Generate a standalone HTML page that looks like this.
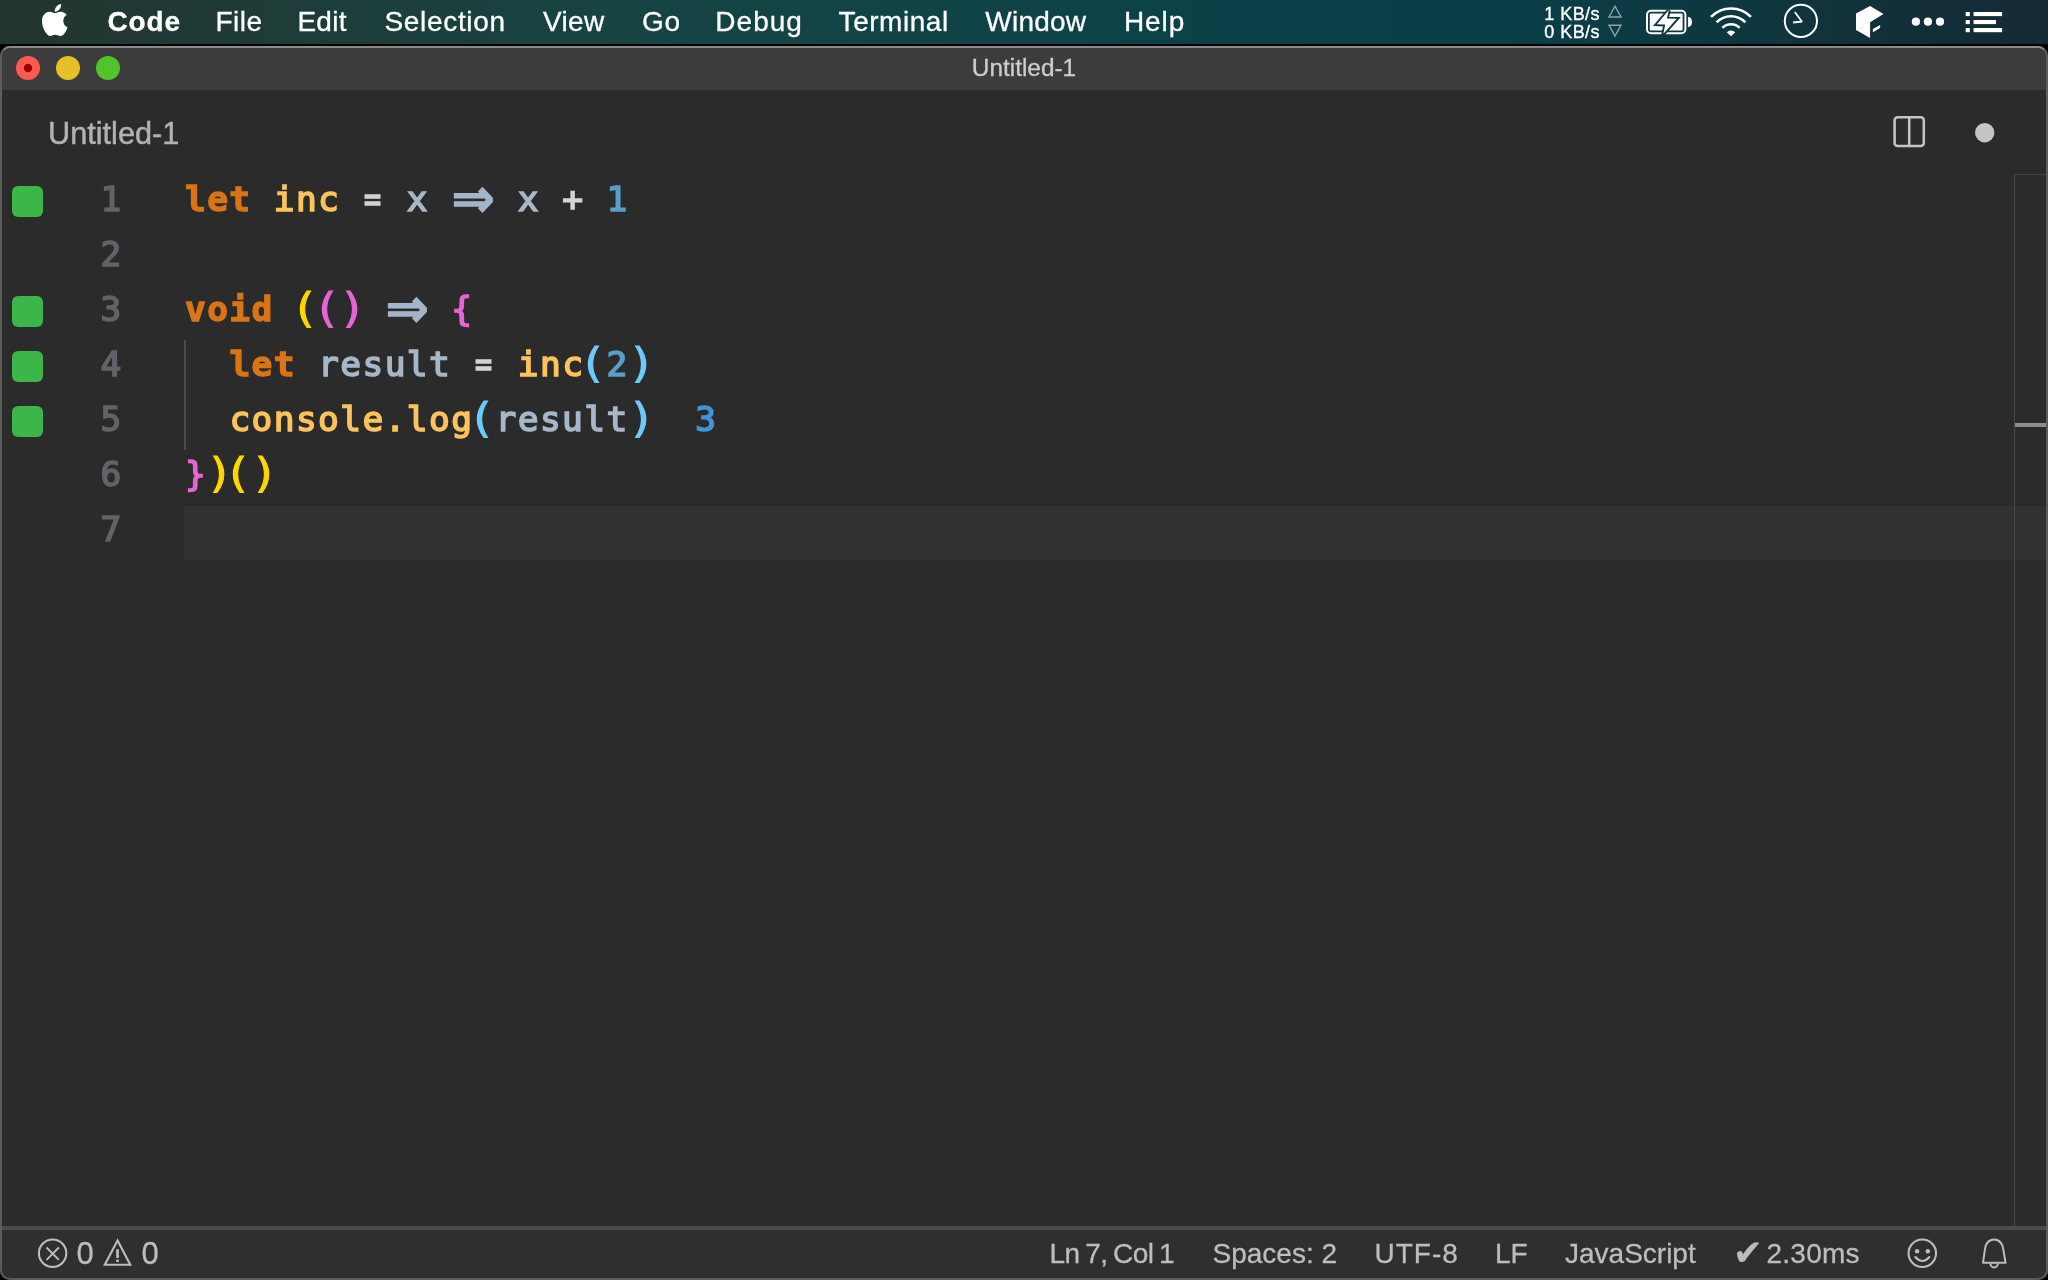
<!DOCTYPE html>
<html lang="en">
<head>
<meta charset="utf-8">
<title>Untitled-1</title>
<style>
*{box-sizing:border-box;margin:0;padding:0}
html,body{width:2048px;height:1280px;overflow:hidden;background:#000}
body{position:relative;font-family:"Liberation Sans",sans-serif;-webkit-font-smoothing:antialiased}
.abs{position:absolute}

/* ---------- macOS menu bar ---------- */
#menubar{position:absolute;left:0;top:0;width:2048px;height:46px;will-change:transform;
  background:linear-gradient(90deg,#233530 0px,#1f3a36 220px,#174443 620px,#0b4248 1200px,#0b3d47 1560px,#0f363e 1760px,#122f39 1900px,#142a36 2048px);}
#menubar .mi{position:absolute;top:0;height:44px;line-height:44px;color:#fff;font-size:28px;white-space:nowrap;-webkit-text-stroke:0.3px #fff}
#menubar .mi.b{font-weight:bold}
#menubar .kb{position:absolute;left:1540px;width:60px;text-align:right;color:#fff;font-size:18px;line-height:20px;white-space:nowrap;letter-spacing:0.45px;-webkit-text-stroke:0.35px #fff}
#mbline{position:absolute;left:0;top:44px;width:2048px;height:3px;background:#000}

/* ---------- window ---------- */
#win{position:absolute;left:0;top:46px;width:2048px;height:1234px;background:#2b2b2b;will-change:transform;
  border-radius:10px 10px 10px 10px;overflow:hidden}
#winborder{position:absolute;left:0;top:46px;width:2048px;height:1234px;border-radius:10px;
  border:2px solid #5c5c5c;border-top-color:#8a8a8a;pointer-events:none}
#titlebar{position:absolute;left:0;top:0;width:2048px;height:44px;background:#3c3c3c}
#title{position:absolute;left:0;top:2px;width:2048px;height:42px;line-height:40px;text-align:center;
  color:#cecece;font-size:24.4px;-webkit-text-stroke:0.3px #cecece}
.tl{position:absolute;top:10px;width:24px;height:24px;border-radius:50%}

/* ---------- tab row ---------- */
#tablabel{position:absolute;left:48px;top:64px;height:48px;line-height:48px;font-size:30.7px;color:#b2b2b2;white-space:nowrap;-webkit-text-stroke:0.45px #b2b2b2}

/* ---------- editor ---------- */
#editor{position:absolute;left:0;top:130px;width:2048px;height:1052px;
  font-family:"DejaVu Sans Mono","Liberation Mono",monospace;font-size:34.5px;letter-spacing:1.41px;-webkit-text-stroke:1.6px}
.ln{position:absolute;left:0;width:2048px;height:55px;line-height:55px;white-space:pre}
.num{position:absolute;left:0;top:-4px;width:122.6px;text-align:right;color:#606469}
.code{position:absolute;left:185px;top:-4px}
.arw{display:inline-block;width:44.36px;height:55px;vertical-align:top;position:relative}
.arw i{position:absolute;left:0;top:0;width:44.36px;height:55px;line-height:55px;text-align:center;font-style:normal;
  font-family:"DejaVu Sans",sans-serif;font-weight:bold;font-size:55px;letter-spacing:0;-webkit-text-stroke:1.2px;transform:translate(-0.9px,-1px) scaleX(0.94)}
.sq{position:absolute;left:12px;top:10px;width:30.5px;height:30.5px;border-radius:6px;background:#3cb648}
#curline{position:absolute;left:184px;top:330px;width:1864px;height:54px;background:#323232}
#guide{position:absolute;left:184.2px;top:164px;width:2.3px;height:110px;background:#4b4b4b}
#ruler-v{position:absolute;left:2014px;top:128px;width:1px;height:1054px;background:#474747}
#ruler-h{position:absolute;left:2014px;top:128px;width:34px;height:1px;background:#3f4144}
#ruler-m{position:absolute;left:2015px;top:377px;width:33px;height:4px;background:#8c8c8c}

.eq{display:inline-block;transform:scaleX(0.82)}
.pl,.pr{display:inline-block;-webkit-text-stroke:0.8px}
.pl{transform-origin:100% 50%;transform:translate(2px,-1.3px) scale(1.33,1.16)}
.pr{transform-origin:0% 50%;transform:translate(-1.2px,-1.3px) scale(1.33,1.16)}
.k{color:#da7516;font-weight:bold;-webkit-text-stroke:1.3px}   /* keyword orange */
.f{color:#fcc35d}   /* function yellow-orange */
.v{color:#a5b7c9}   /* variable gray-blue */
.o{color:#d4d4d4}   /* operator */
.a{color:#a3b5c8}   /* arrow */
.n{color:#5b9ec9}   /* number */
.b1{color:#ffd700}  /* bracket gold */
.b2{color:#e665d6}  /* bracket pink */
.b3{color:#6ccbfb}  /* bracket blue */
.r{color:#3d96d8}   /* inline result */

/* ---------- status bar ---------- */
#statusline{position:absolute;left:0;top:1180px;width:2048px;height:4px;background:#4b4b4b}
#status{position:absolute;left:0;top:1184px;width:2048px;height:50px;background:#2f2f2f;color:#bdbdbd;font-size:28px}
#status .si{position:absolute;top:-1px;height:50px;line-height:50px;white-space:nowrap;-webkit-text-stroke:0.3px #bdbdbd}
#status .z{font-size:31px;top:-1.5px}
#status .ck{font-family:"DejaVu Sans",sans-serif;font-size:35.5px;top:-1.6px;left:1732px}
</style>
</head>
<body>

<div id="menubar">
  <svg class="abs" style="left:42.4px;top:3.8px" width="25.6" height="32" viewBox="4 32 377 448" preserveAspectRatio="none"><path fill="#fff" d="M318.7 268.7c-.2-36.7 16.4-64.4 50-84.8-18.8-26.9-47.2-41.7-84.7-44.6-35.5-2.8-74.3 20.7-88.5 20.7-15 0-49.4-19.7-76.4-19.7C63.3 141.2 4 184.8 4 273.5q0 39.3 14.4 81.2c12.8 36.7 59 126.7 107.2 125.2 25.2-.6 43-17.9 75.8-17.9 31.8 0 48.3 17.9 76.4 17.9 48.6-.7 90.4-82.5 102.6-119.3-65.2-30.7-61.7-90-61.7-91.9zm-56.6-164.2c27.3-32.4 24.8-61.9 24-72.5-24.1 1.4-52 16.4-67.9 34.9-17.5 19.8-27.8 44.3-25.6 71.9 26.1 2 49.9-11.4 69.5-34.3z"/></svg>
  <span class="mi b" style="left:107.4px;letter-spacing:0.86px">Code</span>
  <span class="mi" style="left:215.5px;letter-spacing:0.48px">File</span>
  <span class="mi" style="left:297.4px;letter-spacing:0.29px">Edit</span>
  <span class="mi" style="left:384.5px;letter-spacing:0.67px">Selection</span>
  <span class="mi" style="left:543.0px;letter-spacing:0.35px">View</span>
  <span class="mi" style="left:642.0px;letter-spacing:0.60px">Go</span>
  <span class="mi" style="left:715.3px;letter-spacing:1.02px">Debug</span>
  <span class="mi" style="left:838.6px;letter-spacing:0.54px">Terminal</span>
  <span class="mi" style="left:985.3px;letter-spacing:0.24px">Window</span>
  <span class="mi" style="left:1124.0px;letter-spacing:0.90px">Help</span>
  <span class="kb" style="top:4px">1 KB/s</span>
  <span class="kb" style="top:22.4px">0 KB/s</span>
  <svg class="abs" style="left:0;top:0" width="2048" height="46" viewBox="0 0 2048 46">
    <!-- net triangles -->
    <path d="M1615 6.2 L1621 17 L1609 17 Z" fill="none" stroke="#8ea2a4" stroke-width="1.4" stroke-linejoin="miter"/>
    <path d="M1609 25.2 L1621 25.2 L1615 36 Z" fill="none" stroke="#8ea2a4" stroke-width="1.4" stroke-linejoin="miter"/>
    <!-- battery -->
    <rect x="1647" y="10.7" width="38.4" height="22.6" rx="4" ry="4" fill="none" stroke="#fff" stroke-width="2"/>
    <rect x="1649.8" y="13.5" width="32.8" height="17" rx="1" fill="#fff"/>
    <path d="M1688 17 h0.6 a3.4 5 0 0 1 0 10 h-0.6 Z" fill="#fff"/>
    <path d="M1668.8 10.1 L1666.9 18.6 L1676.8 18.8 L1663.4 33.8 L1665.2 24.6 L1656.9 24.3 Z" fill="#fff" stroke="#0e3a43" stroke-width="3.8" stroke-linejoin="miter" paint-order="stroke"/>
    <!-- wifi -->
    <g fill="none" stroke="#fff" stroke-width="2.6">
      <path d="M1711.0 16.9 A27.9 27.9 0 0 1 1751.0 16.9"/>
      <path d="M1716.6 22.4 A19.9 19.9 0 0 1 1745.4 22.4"/>
      <path d="M1722.4 27.9 A12 12 0 0 1 1739.6 27.9"/>
    </g>
    <path d="M1731 36.3 L1726.8 32.2 A5.9 5.9 0 0 1 1735.2 32.2 Z" fill="#fff"/>
    <!-- clock -->
    <circle cx="1800.9" cy="20.9" r="16.1" fill="none" stroke="#fff" stroke-width="2"/>
    <path d="M1794.75 11.9 L1801.9 21.5" stroke="#fff" stroke-width="1.7" fill="none"/>
    <path d="M1793 22.4 L1802.3 21.6" stroke="#fff" stroke-width="2" fill="none"/>
    <!-- box -->
    <path d="M1870.1 5.9 L1883.5 14.1 L1870.1 22.2 L1870.1 38 L1856 30 L1856 13.4 Z" fill="#fff"/>
    <path d="M1872.9 29.1 L1880.1 25 L1880.1 28.1 L1872.9 32.2 Z" fill="#fff"/>
    <!-- dots -->
    <circle cx="1915.9" cy="21.7" r="4.1" fill="#fff"/><circle cx="1927.9" cy="21.7" r="4.1" fill="#fff"/><circle cx="1940" cy="21.7" r="4.1" fill="#fff"/>
    <!-- list -->
    <g fill="#fff">
      <rect x="1965.7" y="12" width="4.1" height="4.1"/><rect x="1973.6" y="12" width="28.5" height="4.1"/>
      <rect x="1965.7" y="20" width="4.1" height="4.1"/><rect x="1973.6" y="20" width="22.4" height="4.1"/>
      <rect x="1965.7" y="28" width="4.1" height="4.2"/><rect x="1973.6" y="28" width="28.5" height="4.2"/>
    </g>
  </svg>
</div>
<div id="mbline"></div>

<div id="win">
  <div id="titlebar">
    <div class="tl" style="left:16px;background:#ff5a52"></div>
    <div class="tl" style="left:56px;background:#e6c029"></div>
    <div class="tl" style="left:96px;background:#53c22b"></div>
    <div id="title">Untitled-1</div>
  </div>

  <div id="tablabel">Untitled-1</div>

  <div id="editor">
    <div id="curline"></div>
    <div id="guide"></div>
    <div class="ln" style="top:0"><div class="sq"></div><span class="num">1</span><span class="code"><span class="k">let</span> <span class="f">inc</span> <span class="o eq">=</span> <span class="v">x</span> <span class="a arw"><i>⇒</i></span> <span class="v">x</span> <span class="o">+</span> <span class="n">1</span></span></div>
    <div class="ln" style="top:55px"><span class="num">2</span></div>
    <div class="ln" style="top:110px"><div class="sq"></div><span class="num">3</span><span class="code"><span class="k">void</span> <span class="b1 pl">(</span><span class="b2 pl">(</span><span class="b2 pr">)</span> <span class="a arw"><i>⇒</i></span> <span class="b2">{</span></span></div>
    <div class="ln" style="top:165px"><div class="sq"></div><span class="num">4</span><span class="code">  <span class="k">let</span> <span class="v">result</span> <span class="o eq">=</span> <span class="f">inc</span><span class="b3 pl">(</span><span class="n">2</span><span class="b3 pr">)</span></span></div>
    <div class="ln" style="top:220px"><div class="sq"></div><span class="num">5</span><span class="code">  <span class="f">console.log</span><span class="b3 pl">(</span><span class="v">result</span><span class="b3 pr">)</span>  <span class="r">3</span></span></div>
    <div class="ln" style="top:275px"><span class="num">6</span><span class="code"><span class="b2">}</span><span class="b1 pr">)</span><span class="b1 pl">(</span><span class="b1 pr">)</span></span></div>
    <div class="ln" style="top:330px"><span class="num">7</span></div>
  </div>
  <div id="ruler-v"></div><div id="ruler-h"></div><div id="ruler-m"></div>

  <div id="statusline"></div>
  <div id="status">
    <span class="si z" style="left:76.6px">0</span>
    <span class="si z" style="left:141.4px">0</span>
    <span class="si" style="left:1049.5px;word-spacing:-1.6px;letter-spacing:-0.55px">Ln 7, Col 1</span>
    <span class="si" style="left:1212.5px">Spaces: 2</span>
    <span class="si" style="left:1374.5px;letter-spacing:1px">UTF-8</span>
    <span class="si" style="left:1495px">LF</span>
    <span class="si" style="left:1565px">JavaScript</span>
    <span class="si ck" style="left:1733px">✔</span>
    <span class="si" style="left:1766.5px;letter-spacing:0.25px">2.30ms</span>
  </div>
  <!-- icon overlay in absolute page coordinates -->
  <svg class="abs" style="left:0;top:0" width="2048" height="1234" viewBox="0 46 2048 1234">
    <!-- close button inner dot -->
    <circle cx="28" cy="68" r="4.2" fill="#9a0000"/>
    <!-- split editor icon -->
    <rect x="1894.6" y="117.2" width="29.2" height="28.8" rx="3" ry="3" fill="none" stroke="#c5c5c5" stroke-width="2.5"/>
    <path d="M1909.2 117.2 V146" stroke="#c5c5c5" stroke-width="2.5" fill="none"/>
    <!-- dirty dot -->
    <circle cx="1984.7" cy="132.7" r="9.7" fill="#c5c5c5"/>
    <!-- status: error -->
    <g fill="none" stroke="#bdbdbd">
      <circle cx="52.6" cy="1253.2" r="13.7" stroke-width="2.1"/>
      <path d="M46.5 1247.5 L58.9 1259.9 M58.9 1247.5 L46.5 1259.9" stroke-width="1.9"/>
      <!-- warning -->
      <path d="M117.55 1240.6 L130.3 1264.7 L104.8 1264.7 Z" stroke-width="2.1" stroke-linejoin="miter"/>
      <!-- smiley -->
      <circle cx="1922.3" cy="1253.2" r="13.75" stroke-width="2.1"/>
      <path d="M1915.3 1257 Q1922.4 1265 1929.4 1257" stroke-width="2.1" stroke-linecap="round"/>
      <!-- bell -->
      <path d="M1983 1262.8 L1984.9 1249.6 A9.2 10.1 0 0 1 2003.3 1249.6 L2005.6 1262.8 Z" stroke-width="2" stroke-linejoin="round"/>
      <path d="M1990.4 1263.6 A3.7 4 0 0 0 1997.8 1263.6" stroke-width="2"/>
    </g>
    <g fill="#bdbdbd">
      <rect x="116.2" y="1249.2" width="2.7" height="8.8"/><rect x="116.2" y="1259.6" width="2.7" height="2.4"/>
      <circle cx="1917.1" cy="1251.2" r="2.2"/><circle cx="1927.8" cy="1251.2" r="2.2"/>
    </g>
  </svg>
</div>
<div id="winborder"></div>

</body>
</html>
